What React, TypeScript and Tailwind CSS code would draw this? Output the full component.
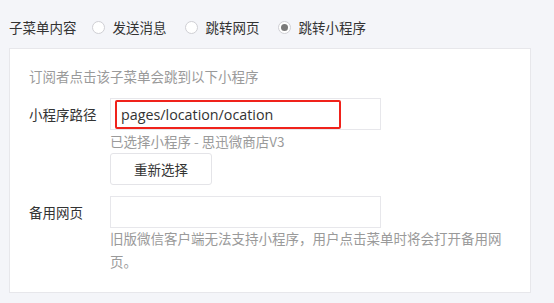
import React from "react";

const font = { fontFamily: '"Noto Sans CJK SC", "Noto Sans", sans-serif' };

function Radio({ checked, label }: { checked?: boolean; label: string }) {
  return (
    <label className="flex items-center gap-2">
      <span className="flex h-[13px] w-[13px] items-center justify-center rounded-full border border-[#cfcfd4] bg-white">
        {checked && <span className="h-[7px] w-[7px] rounded-full bg-[#7a7a7a]" />}
      </span>
      <span className="text-[13.5px] text-[#333]">{label}</span>
    </label>
  );
}

export default function App() {
  return (
    <div className="h-[303px] w-[554px] bg-[#f4f5f9] pl-[9px] pr-[23px] pt-[14px]" style={font}>
      <div className="flex h-[27px] items-center">
        <span className="mr-[15px] text-[13.5px] text-[#333]">子菜单内容</span>
        <div className="flex items-center gap-[18px]">
          <Radio label="发送消息" />
          <Radio label="跳转网页" />
          <Radio checked label="跳转小程序" />
        </div>
      </div>
      <div className="mt-[7px] h-[245px] border border-[#e7e7eb] bg-white pl-[19px] pt-[16px]">
        <div className="text-[13.5px] leading-[22px] text-[#9a9a9a]">订阅者点击该子菜单会跳到以下小程序</div>
        <div className="mt-[11px] flex">
          <div className="w-[81px] pt-[5px] text-[13.5px] leading-[22px] text-[#333]">小程序路径</div>
          <div className="flex flex-col">
            <div className="h-[32px] w-[271px] border border-[#e7e7eb] p-[1px] pl-[4px]">
              <div className="flex h-[29px] w-[226px] items-center rounded-[2px] border-2 border-[#f0221b] pl-[4px] text-[14.3px] text-[#333]" style={{ fontFamily: '"Open Sans", "Noto Sans", sans-serif' }}>
                pages/location/ocation
              </div>
            </div>
            <div className="mt-[1px] text-[13.5px] leading-[21px] text-[#9a9a9a]">已选择小程序 - 思迅微商店V3</div>
            <button className="mt-[1px] h-[32px] w-[102px] rounded-[3px] border border-[#e4e4e8] bg-white text-[13.5px] text-[#333]">重新选择</button>
          </div>
        </div>
        <div className="mt-[11px] flex">
          <div className="w-[81px] pt-[5px] text-[13.5px] leading-[22px] text-[#333]">备用网页</div>
          <div className="flex flex-col">
            <div className="h-[32px] w-[271px] border border-[#e7e7eb]" />
            <div className="mt-[-1px] w-[395px] text-[13.5px] leading-[22.5px] text-[#9a9a9a]">
              旧版微信客户端无法支持小程序，用户点击菜单时将会打开备用网页。
            </div>
          </div>
        </div>
      </div>
    </div>
  );
}
